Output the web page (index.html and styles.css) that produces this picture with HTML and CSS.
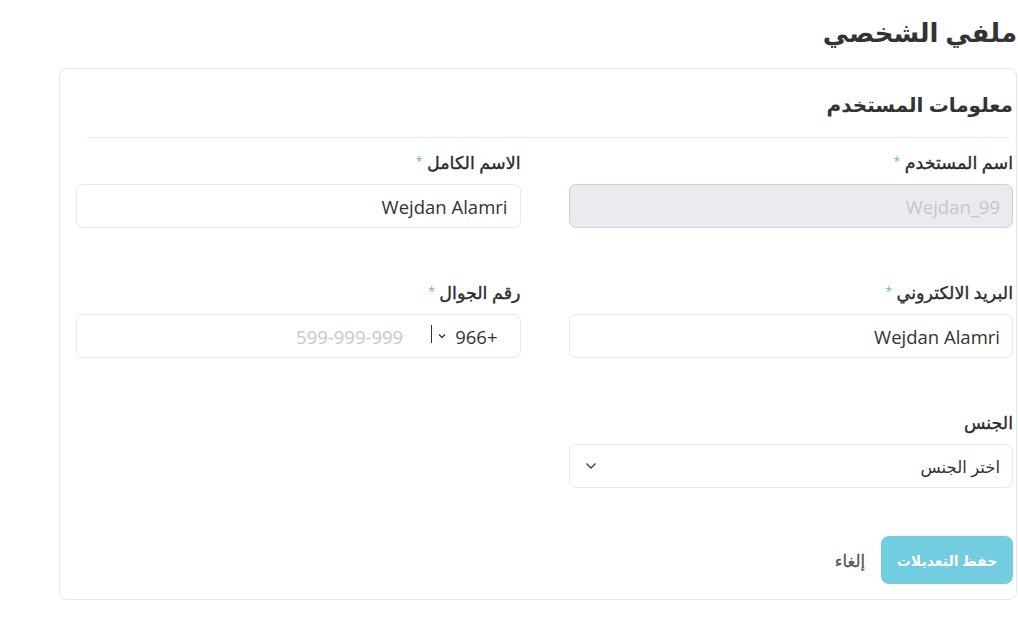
FILE: index.html
```html
<!DOCTYPE html>
<html lang="ar" dir="rtl">
<head>
<meta charset="utf-8">
<title>ملفي الشخصي</title>
<link rel="stylesheet" href="styles.css">
</head>
<body>
<div class="page">
  <h1 class="page-title">ملفي الشخصي</h1>
  <div class="card">
    <h2 class="section-title">معلومات المستخدم</h2>
    <div class="divider"></div>
    <div class="form-grid">
      <div class="field">
        <label class="label">اسم المستخدم <span class="req">*</span></label>
        <div class="input disabled"><span class="ltr">Wejdan_99</span></div>
      </div>
      <div class="field">
        <label class="label">الاسم الكامل <span class="req">*</span></label>
        <div class="input"><span class="ltr">Wejdan Alamri</span></div>
      </div>
      <div class="field">
        <label class="label">البريد الالكتروني <span class="req">*</span></label>
        <div class="input"><span class="ltr">Wejdan Alamri</span></div>
      </div>
      <div class="field">
        <label class="label">رقم الجوال <span class="req">*</span></label>
        <div class="input phone">
          <span class="code">+966</span>
          <svg class="chev-sm" width="8" height="6" viewBox="0 0 8 6"><polyline points="1,1.5 4,4.5 7,1.5" fill="none" stroke="#333" stroke-width="1.3"/></svg>
          <span class="bar"></span>
          <span class="placeholder">599-999-999</span>
        </div>
      </div>
      <div class="field">
        <label class="label">الجنس</label>
        <div class="input select">
          <span>اختر الجنس</span>
          <svg class="chev" width="12" height="8" viewBox="0 0 12 8"><polyline points="1.5,1.5 6,6 10.5,1.5" fill="none" stroke="#444" stroke-width="1.4"/></svg>
        </div>
      </div>
    </div>
    <div class="actions">
      <button class="btn-save">حفظ التعديلات</button>
      <button class="btn-cancel">إلغاء</button>
    </div>
  </div>
</div>
</body>
</html>
```

FILE: styles.css
```css
html, body {
  margin: 0;
  background: #fff;
}
body {
  font-family: "Open Sans", "DejaVu Sans", sans-serif;
  color: #333;
}
.page {
  padding: 12px 1px 40px 59px;
}
.page-title {
  margin: 0 0 16px;
  font-size: 26px;
  line-height: 40px;
  font-weight: bold;
  color: #333;
}
.card {
  border: 1px solid #e8e8e8;
  border-radius: 8px;
  padding: 22px 3px 15px 16px;
}
.section-title {
  margin: 0;
  font-size: 20px;
  line-height: 28px;
  font-weight: bold;
  color: #333;
}
.divider {
  height: 1px;
  background: #ececec;
  margin: 18px 4px 0 11px;
}
.form-grid {
  display: grid;
  grid-template-columns: 1fr 1fr;
  column-gap: 48px;
  row-gap: 52px;
  margin-top: 12px;
}
.field {
  display: flex;
  flex-direction: column;
}
.label {
  font-size: 17.5px;
  line-height: 24px;
  height: 24px;
  font-weight: normal;
  color: #2b2b2b;
  -webkit-text-stroke: 0.35px #2b2b2b;
  margin-bottom: 10px;
}
.req {
  color: #58b9d3;
  font-size: 12px;
  vertical-align: 3px;
  -webkit-text-stroke: 0;
}
.input {
  height: 42px;
  border: 1px solid #e8e8e8;
  border-radius: 7px;
  display: flex;
  align-items: center;
  padding: 0 12px;
  font-size: 18.5px;
  color: #333;
  background: #fff;
}
.ltr {
  direction: ltr;
}
.input.disabled {
  background: #e9ebee;
  border-color: #cfd3d8;
  color: #c3c7cc;
}
.phone {
  padding-right: 22px;
}
.phone .code {
  color: #333;
}
.chev-sm {
  margin-right: 9px;
}
.bar {
  width: 1px;
  height: 18px;
  background: #333;
  margin-right: 6px;
  margin-top: -4px;
}
.placeholder {
  color: #c6c9cd;
  margin-right: 28px;
}
.select {
  justify-content: space-between;
  font-size: 16.5px;
}
.chev {
  margin-left: 3px;
}
.actions {
  display: flex;
  align-items: center;
  gap: 16px;
  margin-top: 48px;
}
.btn-save {
  width: 132px;
  height: 48px;
  border: none;
  border-radius: 8px;
  background: #72cde0;
  color: #fff;
  font-family: inherit;
  font-size: 14px;
  font-weight: bold;
}
.btn-cancel {
  border: none;
  background: none;
  padding: 0;
  font-family: inherit;
  font-size: 16.5px;
  font-weight: normal;
  color: #555;
  -webkit-text-stroke: 0.3px #555;
}
```
